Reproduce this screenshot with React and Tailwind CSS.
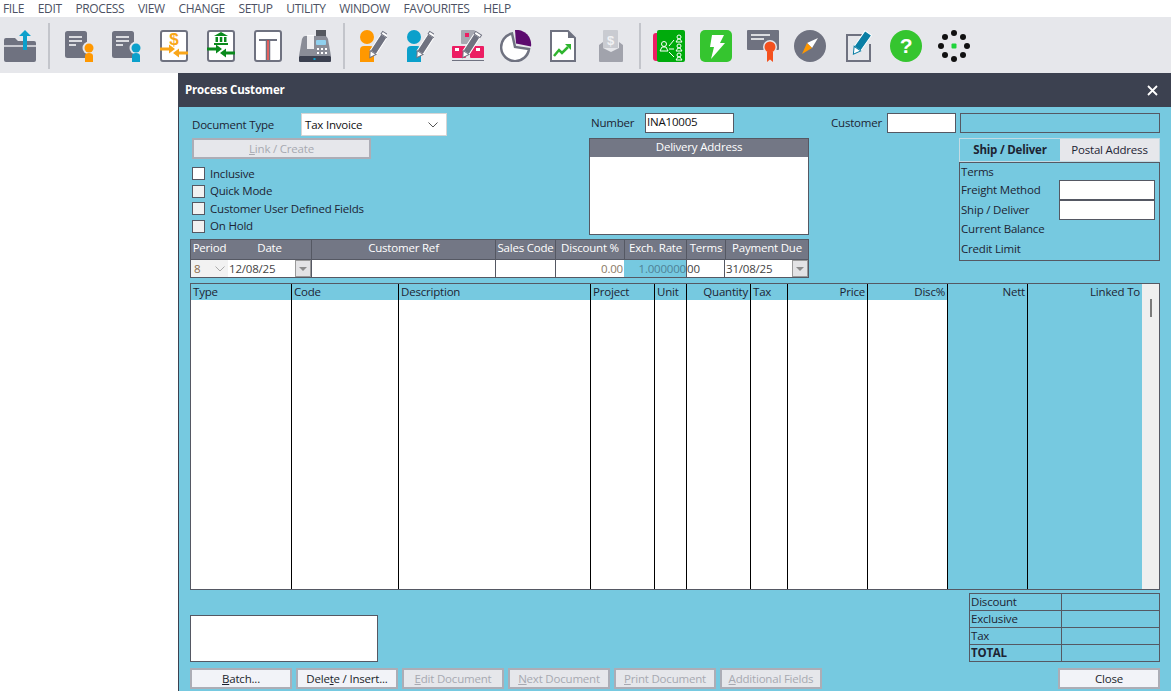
const G = "#6f7280";
const Pencil = ({ x = 0, y = 0, c = G }) => (
  <g transform={`translate(${x} ${y}) rotate(33)`}>
    <rect x="-3.500" y="-11" width="7" height="20" fill={c} stroke="#fff" strokeWidth="1" />
    <path d="M-3.500 9 L3.500 9 L0 15 Z" fill="#fff" stroke={c} strokeWidth="1" />
    <rect x="-3.500" y="-14" width="7" height="3" fill="#fff" stroke={c} strokeWidth="1" />
  </g>
);
const Ic = ({ w = 32, children }) => (
  <svg width={w} height="32" viewBox={`0 0 ${w} 32`} className="shrink-0">{children}</svg>
);
const DocPerson = ({ c }) => (
  <Ic w={30}>
    <rect x="0" y="1" width="22" height="27" rx="2.500" fill={G} />
    <path d="M4 7h13M4 11h13M4 15h7" stroke="#fff" strokeWidth="1.600" />
    <circle cx="24" cy="18" r="6.500" fill="#e6e7eb" />
    <circle cx="24" cy="18" r="4.500" fill={c} />
    <path d="M20 32v-6q0-3 4-3t4 3v6z" fill={c} />
  </Ic>
);
const Swap = ({ c, children }) => (
  <Ic w={28}>
    <rect x="1" y="1" width="26" height="30" rx="2" fill="#fff" stroke={G} strokeWidth="2" />
    {children}
    <path d="M0 17.500h9v-3l6 4.500-6 4.500v-3H0z" fill={c} />
    <path d="M28 21.500h-9v-3l-6 4.500 6 4.500v-3h9z" fill={c} />
  </Ic>
);
const PersonPen = ({ c }) => (
  <Ic w={27}>
    <circle cx="7" cy="7" r="7" fill={c} />
    <path d="M0 32V20q0-4 4-4h6q4 0 4 4v12z" fill={c} />
    <Pencil x={18} y={15} />
  </Ic>
);

const icons1 = [
  <DocPerson c="#ff9800" />,
  <DocPerson c="#0ba0cb" />,
  <Swap c="#f9a61a"><text x="14" y="14.500" textAnchor="middle" fontSize="17" fontWeight="700" fill="#f9a61a" fontFamily="Liberation Sans, sans-serif">$</text></Swap>,
  <Swap c="#0a8a1c"><path d="M7 6l7-4 7 4zM7 13h14v2H7zM8.500 7h2.500v5H8.500zM12.800 7h2.500v5h-2.500zM17 7h2.500v5H17z" fill="#0a8a1c" /></Swap>,
  <Ic w={28}>
    <rect x="1" y="1" width="26" height="30" rx="2" fill="#fff" stroke={G} strokeWidth="2" />
    <path d="M5 10h18" stroke={G} strokeWidth="2" />
    <path d="M12.500 10v20M15.500 10v20" stroke={G} strokeWidth="1.500" />
    <path d="M14 10v20" stroke="#e53935" strokeWidth="1.500" />
  </Ic>,
  <Ic>
    <rect x="17" y="0" width="10" height="7" fill="#55585f" />
    <path d="M6 6h20q2 0 3 3l3 17H0L3 9q1-3 3-3z" fill="#8a8d97" />
    <rect x="8" y="5" width="7" height="14" fill="#fff" opacity=".85" />
    <rect x="17" y="10" width="10" height="5" rx="1" fill="#8fd0ee" />
    <path d="M18 18h2v2h-2zM22 18h2v2h-2zM26 18h2v2h-2zM18 22h2v2h-2zM22 22h2v2h-2zM26 22h2v2h-2z" fill="#fff" />
    <rect x="0" y="26" width="32" height="6" rx="1" fill="#3c4150" />
    <rect x="14.500" y="28" width="2" height="2" fill="#0ba0cb" />
  </Ic>,
];
const icons2 = [
  <PersonPen c="#ff9800" />,
  <PersonPen c="#0ba0cb" />,
  <Ic>
    <rect x="9" y="0" width="14" height="14" rx="1" fill="#a7a9b2" />
    <rect x="13" y="3" width="4" height="4" fill="#ec1e63" />
    <rect x="0" y="16" width="14" height="12" rx="1" fill="#ec1e63" />
    <rect x="18" y="16" width="14" height="12" rx="1" fill="#ec1e63" />
    <rect x="3" y="18" width="4" height="3" fill="#fff" />
    <rect x="24" y="18" width="4" height="3" fill="#fff" />
    <path d="M0 30.500h32" stroke={G} strokeWidth="1" />
    <Pencil x={19} y={15} />
  </Ic>,
  <Ic>
    <path d="M12 3.500A14 14 0 1 0 29 19L15 17z" fill="#fff" stroke={G} strokeWidth="2.500" />
    <path d="M15 0A14.500 14.500 0 0 1 31 16.500L16 13.500z" fill="#5c0a6e" />
  </Ic>,
  <Ic w={26}>
    <path d="M1 1h17l7 7v23H1z" fill="#fff" stroke={G} strokeWidth="2" />
    <path d="M18 1v7h7z" fill={G} />
    <path d="M4 26l5-6 3 3 6-6" fill="none" stroke="#2fb52f" strokeWidth="2.500" />
    <path d="M15 14h6v6z" fill="#2fb52f" />
  </Ic>,
  <Ic w={24}>
    <path d="M4 1q0-1 1-1h13q1 0 1 1v17h-15z" fill="#c9cbd1" />
    <text x="11.500" y="15" textAnchor="middle" fontSize="13" fontWeight="700" fill="#f1f2f4" fontFamily="Liberation Sans, sans-serif">$</text>
    <path d="M0 15l4-3v6l8 4 8-4v-6l4 3v16q0 1-1 1H1q-1 0-1-1z" fill="#a1a3ac" />
  </Ic>,
];
const icons3 = [
  <Ic>
    <rect x="0" y="3" width="8" height="28" rx="3" fill="#ec1e63" />
    <rect x="4" y="0" width="28" height="32" rx="2" fill="#00ab0c" />
    <g fill="none" stroke="#fff" strokeWidth="1">
      <circle cx="11" cy="14" r="2.500" /><path d="M7 21l2-4h4l2 4z" />
      <circle cx="26" cy="7" r="2" /><path d="M23 12l2-3h2l2 3z" />
      <circle cx="26" cy="16" r="2" /><path d="M23 21l2-3h2l2 3z" />
      <circle cx="26" cy="25" r="2" /><path d="M23 30l2-3h2l2 3z" />
      <path d="M16 16l5-6M16 19h5M16 22l5 5" />
    </g>
  </Ic>,
  <Ic>
    <rect x="0" y="0" width="32" height="32" rx="5" fill="#35c52f" />
    <path d="M12 5h12l-4 8h5L11 29l3-12H10z" fill="#fff" />
  </Ic>,
  <Ic>
    <rect x="0" y="0" width="32" height="20" rx="1" fill={G} />
    <path d="M4 5h19M4 9h13" stroke="#fff" strokeWidth="1.500" />
    <circle cx="23" cy="17" r="7" fill="#e6e7eb" />
    <circle cx="23" cy="17" r="5.500" fill="#f4511e" />
    <path d="M20 22h6v10l-3-2.500-3 2.500z" fill="#f4511e" />
  </Ic>,
  <Ic>
    <circle cx="16" cy="16" r="16" fill={G} />
    <path d="M24 8L13 13l5 5z" fill="#fff" />
    <path d="M8 24l5-11 5 5z" fill="#ff9800" />
  </Ic>,
  <Ic w={26}>
    <path d="M16 5H1v26h23V14" fill="none" stroke={G} strokeWidth="2" />
    <g transform="translate(16 12) rotate(35)"><rect x="-4" y="-11" width="8" height="19" fill="#0b7fa5" stroke="#fff" strokeWidth="1" /><path d="M-4 8h8l-4 7z" fill="#fff" stroke="#0b7fa5" /></g>
  </Ic>,
  <Ic>
    <circle cx="16" cy="16" r="16" fill="#35c52f" />
    <text x="16" y="23" textAnchor="middle" fontSize="21" fontWeight="700" fill="#fff" fontFamily="Liberation Sans, sans-serif">?</text>
  </Ic>,
  <Ic>
    {[[16, 3], [25, 7], [29, 16], [25, 25], [16, 29], [7, 25], [3, 16], [7, 7]].map(([x, y], i) => (
      <circle key={i} cx={x} cy={y} r="3" fill="#111" />
    ))}
    <rect x="13.500" y="13.500" width="5" height="5" rx="1" fill="#1ed43a" />
  </Ic>,
];

const Sep = ({ className = "mx-[12px]" }) => <div className={`w-[2px] h-[46px] bg-[#c3c5cb] shrink-0 ${className}`} />;

const Btn = ({ w, dis, children, className = "" }) => (
  <div className={`h-[21px] flex items-center justify-center border-2 border-[#acadb6] shrink-0 ${dis ? "bg-[#e6e7eb] text-[#a7a9b1]" : "bg-[#f2f3f8] text-[#1b1f2c]"} ${className}`} style={{ width: w }}>
    {children}
  </div>
);
const Check = ({ label, white }) => (
  <div className="h-[17.500px] flex items-center">
    <div className={`w-[13px] h-[13px] border border-[#555863] ${white ? "bg-white" : "bg-[#f1f1f1]"}`} />
    <span className="ml-[5px]">{label}</span>
  </div>
);
const periodCols = [
  ["Period", 38], ["Date", 83], ["Customer Ref", 184], ["Sales Code", 60], ["Discount %", 69], ["Exch. Rate", 62], ["Terms", 39], ["Payment Due", 84],
];
const Drop = () => (
  <div className="w-[16px] h-[17px] bg-[#e3e3e5] border border-[#9a9a9a] flex items-center justify-center">
    <div className="w-0 h-0 border-x-[4px] border-x-transparent border-t-[4px] border-t-[#8c8c8c]" />
  </div>
);
const Chev = ({ c = "#555" }) => (
  <svg width="10" height="6" viewBox="0 0 10 6"><path d="M.5.5L5 5 9.500.5" fill="none" stroke={c} strokeWidth="1" /></svg>
);
const tableCols = [
  ["Type", 101, 0, 1], ["Code", 107, 0, 1], ["Description", 192, 0, 1], ["Project", 64, 0, 1], ["Unit", 32, 0, 1], ["Quantity", 64, 1, 1], ["Tax", 37, 0, 1], ["Price", 80, 1, 1], ["Disc%", 80, 1, 1], ["Nett", 80, 1, 0], ["Linked To", 114, 1, 0],
];

export default function App() {
  return (
    <div className="w-[1171px] h-[691px] overflow-hidden bg-white text-[11.500px] tracking-[-0.2px] leading-[16px] text-[#1d2433]" style={{ fontFamily: '"Open Sans", "Noto Sans", sans-serif' }}>
      <div className="h-[17px] flex items-center pl-[3px] gap-[13.700px] text-[12px] text-[#4c5163] tracking-[-0.35px]">
        {["FILE", "EDIT", "PROCESS", "VIEW", "CHANGE", "SETUP", "UTILITY", "WINDOW", "FAVOURITES", "HELP"].map((m) => (
          <span key={m}>{m}</span>
        ))}
      </div>
      <div className="h-[56px] bg-[#e6e7eb] flex items-center pl-[4px] pt-[1px]">
        <Ic>
          <path d="M0 10q0-2 2-2h9l3 3h16q2 0 2 2v17q0 2-2 2H2q-2 0-2-2z" fill={G} />
          <path d="M0 16h32" stroke="#e6e7eb" strokeWidth="1.500" />
          <path d="M21 0l6 6h-4v14h-4V6h-4z" fill="#0ba0cb" />
        </Ic>
        <Sep />
        <div className="flex items-center gap-[16px] pl-[2px]">
          {icons1.map((x, i) => <div key={i} className="w-[31px] flex justify-center">{x}</div>)}
        </div>
        <Sep className="ml-[13px] mr-[12px]" />
        <div className="flex items-center gap-[15.500px]">
          {icons2.map((x, i) => <div key={i} className="w-[32px] flex justify-center">{x}</div>)}
        </div>
        <Sep />
        <div className="flex items-center gap-[15px]">
          {icons3.map((x, i) => <div key={i} className={`w-[32px] flex justify-center ${i === 4 ? "ml-[2px]" : i === 6 ? "ml-[1px]" : ""}`}>{x}</div>)}
        </div>
      </div>

      <div className="ml-[178px] h-[618px] flex flex-col">
        <div className="h-[34px] shrink-0 bg-[#3c4150] flex items-center justify-between pl-[7px] pr-[13px] text-white font-bold">
          <span>Process Customer</span>
          <svg width="11" height="11" viewBox="0 0 11 11"><path d="M1 1l9 9M10 1l-9 9" stroke="#fff" strokeWidth="1.800" /></svg>
        </div>
        <div className="flex-1 bg-[#76c9e0] border-l border-[#3c4150] pl-[11px] pr-[11px] pt-[6px] flex flex-col">
          <div className="flex h-[165px] shrink-0">
            <div className="w-[619px] flex flex-col">
              <div className="flex h-[126px]">
                <div className="w-[399px]">
                  <div className="flex items-start h-[25px]">
                    <span className="w-[111px] pl-[2px] pt-[4px]">Document Type</span>
                    <div className="w-[146px] h-[23px] bg-white border border-[#d5d5d5] flex items-center justify-between pl-[3px] pr-[8px] text-[#111]">
                      <span>Tax Invoice</span><Chev />
                    </div>
                  </div>
                  <Btn w={179} dis className="ml-[2px]"><span><u>L</u>ink / Create</span></Btn>
                  <div className="mt-[6px] ml-[2px]">
                    <Check label="Inclusive" white />
                    <Check label="Quick Mode" />
                    <Check label="Customer User Defined Fields" />
                    <Check label="On Hold" />
                  </div>
                </div>
                <div className="w-[220px]">
                  <div className="flex items-center h-[20px]">
                    <span className="ml-[2px] w-[54px]">Number</span>
                    <div className="w-[89px] h-[20px] bg-white border border-[#555863] pl-[1px] text-[#111]">INA10005</div>
                  </div>
                  <div className="mt-[5px] h-[97px] border border-[#555863] flex flex-col">
                    <div className="h-[18px] bg-[#737785] text-white text-center">Delivery Address</div>
                    <div className="flex-1 bg-white" />
                  </div>
                </div>
              </div>
              <div className="flex flex-col border border-[#555863] h-[39px]">
                <div className="flex h-[19px] bg-[#737785] text-white">
                  {periodCols.map(([t, w], i) => (
                    <div key={t} className={`text-center shrink-0 whitespace-nowrap ${i > 1 ? "border-l border-[#555863]" : ""}`} style={{ width: i === 0 || i === 7 ? w - 1 : w }}>{t}</div>
                  ))}
                </div>
                <div className="flex flex-1 bg-white text-[#444] border-t border-[#555863]">
                  <div className="w-[37px] bg-[#f2f2f2] flex items-center justify-between pl-[3px] pr-[3px] text-[#8a6a4a]"><span>8</span><Chev c="#aaa" /></div>
                  <div className="w-[83px] flex items-center justify-between pl-[1px]"><span>12/08/25</span><Drop /></div>
                  <div className="w-[184px] border-l border-[#555863]" />
                  <div className="w-[60px] border-l border-[#555863]" />
                  <div className="w-[69px] border-l border-[#555863] pr-[1px] text-[#8b7a66] flex items-center justify-end">0.00</div>
                  <div className="w-[62px] bg-[#76c9e0] text-[#4f8296] flex items-center justify-end">1.000000</div>
                  <div className="w-[39px] border-x border-[#555863] flex items-center">00</div>
                  <div className="flex-1 flex items-center justify-between pl-[1px]"><span>31/08/25</span><Drop /></div>
                </div>
              </div>
            </div>
            <div className="ml-[22px] w-[329px]">
              <div className="flex items-center h-[20px]">
                <span className="w-[56px]">Customer</span>
                <div className="w-[69px] h-[20px] bg-white border border-[#555863]" />
                <div className="ml-[4px] flex-1 h-[20px] border border-[#555863]" />
              </div>
              <div className="mt-[5px] ml-[128px] h-[24px] flex border border-[#c3dbe4]">
                <div className="w-[100px] flex items-center justify-center font-bold">Ship / Deliver</div>
                <div className="flex-1 flex items-center justify-center bg-[#e6e7eb]">Postal Address</div>
              </div>
              <div className="ml-[128px] h-[99px] border border-[#555863] flex flex-col pl-[1px]">
                <div className="h-[17px] flex items-center">Terms</div>
                <div className="h-[20px] flex items-center justify-between pr-[4px]">
                  <span>Freight Method</span><div className="w-[96px] h-[20px] bg-white border border-[#555863]" />
                </div>
                <div className="h-[19px] flex items-center justify-between pr-[4px]">
                  <span>Ship / Deliver</span><div className="w-[96px] h-[20px] bg-white border border-[#555863]" />
                </div>
                <div className="h-[20px] flex items-center">Current Balance</div>
                <div className="h-[19px] flex items-center">Credit Limit</div>
              </div>
            </div>
          </div>

          <div className="mt-[5px] w-[970px] h-[307px] shrink-0 border border-[#555863] flex">
            {tableCols.map(([t, w, right, white], i) => (
              <div key={t} className={`flex flex-col shrink-0 ${i < 10 ? "border-r border-black" : ""}`} style={{ width: w }}>
                <div className={`h-[16px] leading-[16px] px-[2px] bg-[#76c9e0] ${right ? "text-right" : ""}`}>{t}</div>
                <div className={`flex-1 ${white ? "bg-white" : ""}`} />
              </div>
            ))}
            <div className="flex-1 bg-[#efefef] pt-[15px] flex justify-center">
              <div className="w-[2px] h-[18px] bg-[#7b7b7b]" />
            </div>
          </div>

          <div className="flex justify-between mt-[3px]">
            <div className="flex flex-col">
              <div className="mt-[22px] w-[188px] h-[47px] bg-white border border-[#555863]" />
              <div className="mt-[6px] flex gap-[4px]">
                <Btn w={102}><span><u>B</u>atch...</span></Btn>
                <Btn w={102}><span>Dele<u>t</u>e / Insert...</span></Btn>
                <Btn w={102} dis><span><u>E</u>dit Document</span></Btn>
                <Btn w={102} dis><span><u>N</u>ext Document</span></Btn>
                <Btn w={102} dis><span><u>P</u>rint Document</span></Btn>
                <Btn w={102} dis><span><u>A</u>dditional Fields</span></Btn>
              </div>
            </div>
            <div className="flex flex-col items-end">
              <div className="w-[191px] border border-[#555863] grid grid-cols-[92px_1fr] grid-rows-[17px_17px_17px_16px]">
                {["Discount", "Exclusive", "Tax", "TOTAL"].map((t, i) => (
                  <div key={t} className="contents">
                    <div className={`pl-[1px] border-r border-[#555863] ${i < 3 ? "border-b" : "font-bold"} border-b-[#555863]`}>{t}</div>
                    <div className={i < 3 ? "border-b border-[#555863]" : ""} />
                  </div>
                ))}
              </div>
              <Btn w={102} className="mt-[6px]">Close</Btn>
            </div>
          </div>
        </div>
      </div>
    </div>
  );
}
